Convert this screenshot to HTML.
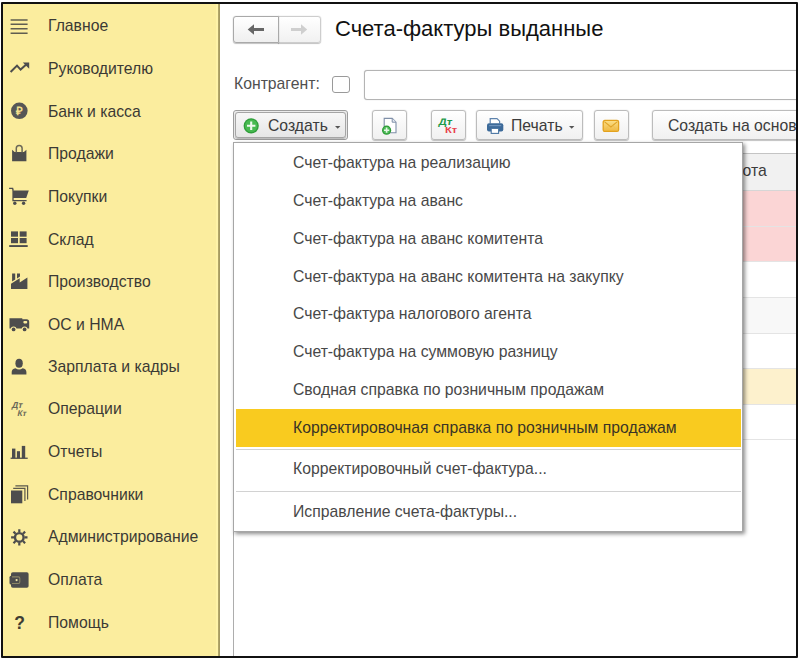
<!DOCTYPE html>
<html lang="ru">
<head>
<meta charset="utf-8">
<title>Счета-фактуры выданные</title>
<style>
html,body{margin:0;padding:0;}
body{width:800px;height:660px;position:relative;overflow:hidden;background:#fff;font-family:"Liberation Sans",Arial,sans-serif;font-size:15.75px;color:#3a3a3a;}
.abs{position:absolute;}
#frame{left:1px;top:2px;width:793px;height:652px;border:2px solid #111;box-sizing:content-box;z-index:50;pointer-events:none;box-shadow:0 0 0 5px #fff;border-radius:1px;}
#side{left:3px;top:4px;width:217px;height:652px;background:linear-gradient(90deg,#fbed9e 213.5px,#fef3a8 213.5px,#fef3a8 215.3px,#b3a76a 215.3px,#a59a60 216.6px,#e8e4d0 217px);}
.si{position:absolute;left:45px;white-space:nowrap;line-height:20px;height:20px;color:#3b3a35;}
.ic{position:absolute;left:5px;width:20px;height:20px;}
.btn{position:absolute;box-sizing:border-box;border:1px solid #bcbcbc;border-radius:3px;background:linear-gradient(#ffffff,#f0f0f0);box-shadow:0 0 1px rgba(0,0,0,.3),0 1px 1px rgba(0,0,0,.22);}
.t{position:absolute;white-space:nowrap;line-height:20px;}
.mi{position:absolute;left:59px;white-space:nowrap;line-height:20px;color:#484848;}
.row{position:absolute;left:234px;width:563px;border-bottom:1px solid #e4e4e4;box-sizing:border-box;}
</style>
</head>
<body>
<!-- sidebar -->
<div id="side" class="abs">
  <div class="si" style="top:12px">Главное</div>
  <div class="si" style="top:55px">Руководителю</div>
  <div class="si" style="top:98px">Банк и касса</div>
  <div class="si" style="top:140px">Продажи</div>
  <div class="si" style="top:183px">Покупки</div>
  <div class="si" style="top:226px">Склад</div>
  <div class="si" style="top:268px">Производство</div>
  <div class="si" style="top:311px">ОС и НМА</div>
  <div class="si" style="top:353px">Зарплата и кадры</div>
  <div class="si" style="top:395px">Операции</div>
  <div class="si" style="top:438px">Отчеты</div>
  <div class="si" style="top:481px">Справочники</div>
  <div class="si" style="top:523px">Администрирование</div>
  <div class="si" style="top:566px">Оплата</div>
  <div class="si" style="top:609px">Помощь</div>
</div>

<svg class="abs" style="left:0;top:0" width="60" height="660" viewBox="0 0 60 660" fill="#4d4d4d" stroke="none">
  <!-- menu -->
  <g stroke="#5f5d50" stroke-width="1.5" fill="none"><path d="M10.6 19.9H27.6M10.6 24.2H27.6M10.6 28.8H27.6M10.6 33.2H27.6"/></g>
  <!-- trend -->
  <path d="M10.6 72 L17 65.6 L20.6 69.6 L26.5 64.3" fill="none" stroke="#4d4d4d" stroke-width="2" stroke-linejoin="miter"/>
  <path d="M22.8 62.6 H29.2 V68.8 Z"/>
  <!-- ruble -->
  <circle cx="19.3" cy="110.8" r="8.3" fill="#565656"/>
  <text x="19.4" y="115.2" font-family="Liberation Sans, sans-serif" font-weight="bold" font-size="11.5" text-anchor="middle" fill="#f3e08c">₽</text>
  <!-- bag -->
  <path d="M12.1 149.8 L14.6 152 H23.9 L26.4 149.8 V161.2 H12.1 Z"/>
  <path d="M16.3 152.5 V148.3 A2.9 2.9 0 0 1 22.1 148.3 V152.5" fill="none" stroke="#6b6858" stroke-width="1.5"/>
  <!-- cart -->
  <path d="M9.1 188.4 H12.6 L13.2 190.7" fill="none" stroke="#4d4d4d" stroke-width="1.4"/>
  <path d="M12.4 190.6 H28.8 L26.2 198 H12.4 Z"/>
  <path d="M13 198 V200.6 H26.6" fill="none" stroke="#4d4d4d" stroke-width="1.3"/>
  <circle cx="14.8" cy="203.3" r="1.7"/><circle cx="23.6" cy="203.3" r="1.7"/>
  <!-- warehouse -->
  <rect x="11" y="231.4" width="7" height="5.3"/><rect x="19.7" y="231.4" width="6.9" height="5.3"/>
  <rect x="11" y="238" width="7" height="5.2"/><rect x="19.7" y="238" width="6.9" height="5.2"/>
  <rect x="9.2" y="245.1" width="18.5" height="1.9"/>
  <!-- factory -->
  <path d="M11 289 V283.8 L19.7 278.3 V282.4 L27.4 277.6 V289 Z"/>
  <path d="M12.1 273.6 H15.2 V279.6 L12.1 281.6 Z M17 273.6 H20 V276.4 L17 278.4 Z"/>
  <!-- truck -->
  <path d="M9.5 318.2 H22.3 V319.3 H26.6 Q29.2 319.3 29.2 322 V328.4 H9.5 Z"/>
  <rect x="23.4" y="321" width="3.8" height="2.4" rx="0.8" fill="#fbed9e"/>
  <circle cx="13.6" cy="329.3" r="2.9" fill="#fbed9e"/><circle cx="24.6" cy="329.3" r="2.9" fill="#fbed9e"/>
  <circle cx="13.6" cy="329.4" r="1.9"/><circle cx="24.6" cy="329.4" r="1.9"/>
  <!-- person -->
  <ellipse cx="19.1" cy="363.3" rx="3.7" ry="4.5"/>
  <path d="M11.7 374.6 V372 Q11.7 369 15.5 368.2 Q19.1 370.6 22.7 368.2 Q26.4 369 26.4 372 V374.6 Z"/>
  <!-- DtKt -->
  <g font-family="Liberation Sans, sans-serif" font-weight="bold" fill="#6a6858" transform="skewX(-12) translate(88,0)">
    <text x="10.2" y="407.6" font-size="8.8">Дт</text>
    <text x="17.6" y="416.4" font-size="8.2">Кт</text>
  </g>
  <!-- reports -->
  <rect x="12" y="448.6" width="3.4" height="9.6"/><rect x="16.9" y="451.2" width="3.1" height="7"/><rect x="21.8" y="445.9" width="3.4" height="12.3"/>
  <rect x="10.6" y="457.6" width="17.1" height="1.3"/>
  <!-- catalogs -->
  <rect x="11" y="490.5" width="11.3" height="12.8"/>
  <path d="M13.2 488.3 H24.9 V501" fill="none" stroke="#5b594c" stroke-width="1.2"/>
  <path d="M15.4 485.9 H27.6 V499.4" fill="none" stroke="#5b594c" stroke-width="1.2"/>
  <!-- gear -->
  <circle cx="19.3" cy="537.4" r="4.3" fill="none" stroke="#4d4d4d" stroke-width="2.4"/>
  <path d="M24.50 537.40L27.50 537.40M22.98 541.08L25.10 543.20M19.30 542.60L19.30 545.60M15.62 541.08L13.50 543.20M14.10 537.40L11.10 537.40M15.62 533.72L13.50 531.60M19.30 532.20L19.30 529.20M22.98 533.72L25.10 531.60" stroke="#4d4d4d" stroke-width="2.2" fill="none"/>
  <!-- wallet -->
  <rect x="11" y="572.3" width="17.6" height="15.4" rx="1.8"/>
  <rect x="9.5" y="575.8" width="11.4" height="8.8" rx="1.5"/>
  <path d="M12 576.9 H18.4 Q19.8 576.9 19.8 578.3 V582.1 Q19.8 583.5 18.4 583.5 H12" fill="none" stroke="#8c8666" stroke-width="1.1"/>
  <circle cx="16.6" cy="580.1" r="1.1" fill="#f3e8a8"/>
  <!-- help -->
  <text x="19.5" y="628.6" font-family="Liberation Sans, sans-serif" font-weight="bold" font-size="17.5" text-anchor="middle" fill="#3f3d33">?</text>
</svg>

<!-- header -->
<div class="btn" style="left:278px;top:16px;width:43px;height:27px;border-color:#cdcdcd;border-radius:0 3px 3px 0;background:linear-gradient(#ffffff,#f1f1f1)"></div>
<div class="btn" style="left:233px;top:16px;width:46px;height:27px;border-color:#a9a9a9;border-radius:3px 0 0 3px;background:linear-gradient(#ffffff,#efefef)"></div>
<svg class="abs" style="left:233px;top:16px" width="88" height="27" viewBox="0 0 88 27">
  <path d="M14.7 13.5 L21 8.3 V12 H31 V15 H21 V18.7 Z" fill="#666"/>
  <path d="M74.2 13.5 L68 8.3 V12 H58 V15 H68 V18.7 Z" fill="#cfcfcf"/>
</svg>
<div class="t" style="left:335px;top:16px;font-size:22px;line-height:26px;color:#111;">Счета-фактуры выданные</div>

<!-- filter row -->
<div class="t" style="left:234px;top:74px;color:#505050">Контрагент:</div>
<div class="abs" style="left:332px;top:76px;width:18px;height:17px;box-sizing:border-box;border:1px solid #9a9a9a;border-radius:3px;background:#fff"></div>
<div class="abs" style="left:364px;top:70px;width:440px;height:30px;box-sizing:border-box;border:1px solid #b4b4b4;border-radius:3px;background:#fff;box-shadow:0 0 1px rgba(0,0,0,.3)"></div>

<!-- toolbar -->
<div class="abs" style="left:233px;top:110px;width:115px;height:30px;box-sizing:border-box;border:1px solid #9d9d9d;border-radius:3px;background:#f2f2f2"></div>
<div class="btn" style="left:235px;top:112px;width:111px;height:26px;border-color:#a5a5a5;background:linear-gradient(#f7f7f7,#e6e6e6)"></div>
<svg class="abs" style="left:243px;top:118px" width="16" height="16" viewBox="0 0 16 16"><circle cx="8.2" cy="7.8" r="7.6" fill="#2f9e3a"/><circle cx="8.2" cy="7.8" r="6.3" fill="#47ba51"/><path d="M8.2 3.6V12M4 7.8H12.4" stroke="#eef9ee" stroke-width="2.1"/></svg>
<div class="t" style="left:268px;top:116px;color:#3c3c3c">Создать</div>
<svg class="abs" style="left:334px;top:125px" width="8" height="5" viewBox="0 0 8 5"><path d="M1 1H6.4L3.7 3.8Z" fill="#555"/></svg>

<div class="btn" style="left:372px;top:110px;width:35px;height:30px;"></div>
<svg class="abs" style="left:380px;top:115px" width="20" height="20" viewBox="0 0 20 20">
  <path d="M4.2 3.4 H12.2 L16 7.2 V17.8 H4.2 Z" fill="#fff" stroke="#7f8fa8" stroke-width="1.1"/>
  <path d="M12.2 3.4 V7.2 H16" fill="#e8edf4" stroke="#7f8fa8" stroke-width="1"/>
  <circle cx="6.6" cy="15.2" r="4.6" fill="#2c9a36"/>
  <circle cx="6.6" cy="15.2" r="3.4" fill="#4dbb57"/>
  <path d="M6.6 12.6V17.8M4 15.2H9.2" stroke="#e6f6e6" stroke-width="1.6"/>
</svg>
<div class="btn" style="left:431px;top:110px;width:35px;height:30px;"></div>
<svg class="abs" style="left:431px;top:110px" width="35" height="30" viewBox="0 0 35 30" font-family="Liberation Sans, sans-serif" font-weight="bold">
  <text x="7.2" y="15.2" font-size="9.4" fill="#1f9a4a" textLength="13.8" lengthAdjust="spacingAndGlyphs" transform="skewX(-8) translate(2.1,0)">Дт</text>
  <text x="14" y="23.4" font-size="8.6" fill="#e8424c" textLength="12.2" lengthAdjust="spacingAndGlyphs">Кт</text>
</svg>
<div class="btn" style="left:476px;top:110px;width:107px;height:30px;"></div>
<svg class="abs" style="left:485px;top:116px" width="20" height="20" viewBox="0 0 20 20">
  <path d="M5.2 7.4 V2.6 H12 L14.6 5.2 V7.4" fill="#fff" stroke="#5e83ad" stroke-width="1.2"/>
  <rect x="2" y="7.2" width="16.3" height="8.4" rx="2" fill="#3c6a99"/>
  <rect x="4.2" y="9" width="12" height="1.2" fill="#6d93bd"/>
  <rect x="6.2" y="12.4" width="7.4" height="5" fill="#fff" stroke="#4b76a3" stroke-width="1.1"/>
</svg>
<div class="t" style="left:511px;top:116px;color:#3c3c3c">Печать</div>
<svg class="abs" style="left:568px;top:125px" width="8" height="5" viewBox="0 0 8 5"><path d="M1 1H6.4L3.7 3.8Z" fill="#555"/></svg>
<div class="btn" style="left:594px;top:110px;width:35px;height:30px;"></div>
<svg class="abs" style="left:600px;top:116px" width="22" height="20" viewBox="0 0 22 20">
  <defs><linearGradient id="env" x1="0" y1="0" x2="0" y2="1"><stop offset="0" stop-color="#fbe08a"/><stop offset="1" stop-color="#f0b840"/></linearGradient></defs>
  <rect x="3.2" y="4.4" width="15.4" height="11" rx="1.6" fill="url(#env)" stroke="#e3a21e" stroke-width="1.3"/>
  <path d="M4.4 5.6 L10.9 11 L17.4 5.6" fill="none" stroke="#e0a428" stroke-width="1.1"/>
  <path d="M4.4 14.4 L9 9.6 M17.4 14.4 L12.8 9.6" fill="none" stroke="#ecc056" stroke-width="0.8"/>
</svg>
<div class="btn" style="left:652px;top:110px;width:160px;height:30px;"></div>
<div class="t" style="left:668px;top:116px;color:#3c3c3c">Создать на основ</div>

<!-- table -->
<div class="abs" style="left:233px;top:153px;width:1px;height:505px;background:#adadad"></div>
<div class="abs" style="left:234px;top:153px;width:563px;height:1px;background:#c4c4c4"></div>
<div class="row" style="top:154px;height:37px;background:#f1f1f1;border-bottom-color:#d6d6d6"></div>
<div class="t" style="left:742.5px;top:161px;color:#3c3c3c">ота</div>
<div class="row" style="top:191px;height:36px;background:#fbd5d5"></div>
<div class="row" style="top:227px;height:35px;background:#fbd5d5"></div>
<div class="row" style="top:262px;height:36px;background:#fff"></div>
<div class="row" style="top:298px;height:36px;background:#f8f8f8"></div>
<div class="row" style="top:334px;height:35px;background:#fff"></div>
<div class="row" style="top:369px;height:36px;background:#fdf1cd"></div>
<div class="row" style="top:405px;height:35px;background:#fff"></div>

<!-- dropdown menu -->
<div id="menu" class="abs" style="left:233px;top:142px;width:510px;height:390px;box-sizing:border-box;background:#fff;border:1px solid #a6a6a6;box-shadow:2px 2px 4px rgba(0,0,0,.45);">
  <div class="abs" style="left:2px;top:266px;width:505px;height:38px;background:#f9cb1f"></div>
  <div class="abs" style="left:2px;top:306px;width:505px;height:1px;background:#d2d2d2"></div>
  <div class="abs" style="left:2px;top:348px;width:505px;height:1px;background:#d2d2d2"></div>
  <div class="mi" style="top:10px">Счет-фактура на реализацию</div>
  <div class="mi" style="top:48px">Счет-фактура на аванс</div>
  <div class="mi" style="top:86px">Счет-фактура на аванс комитента</div>
  <div class="mi" style="top:124px">Счет-фактура на аванс комитента на закупку</div>
  <div class="mi" style="top:161px">Счет-фактура налогового агента</div>
  <div class="mi" style="top:199px">Счет-фактура на суммовую разницу</div>
  <div class="mi" style="top:237px">Сводная справка по розничным продажам</div>
  <div class="mi" style="top:275px;color:#3a3426">Корректировочная справка по розничным продажам</div>
  <div class="mi" style="top:316px">Корректировочный счет-фактура...</div>
  <div class="mi" style="top:359px">Исправление счета-фактуры...</div>
</div>

<div id="frame" class="abs"></div>
</body>
</html>
